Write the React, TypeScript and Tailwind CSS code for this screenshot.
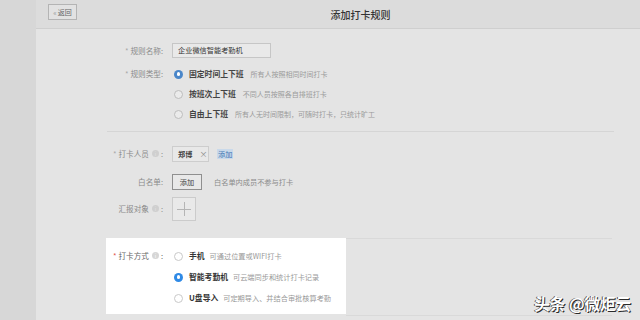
import * as React from "react";

const RADIO_SIZE = "h-[9px] w-[9px]";

function Radio({ checked, dim }: { checked?: boolean; dim?: boolean }) {
  if (checked) {
    return (
      <span
        className={`flex ${RADIO_SIZE} shrink-0 items-center justify-center rounded-full ${dim ? "bg-[#4a86c9]" : "bg-[#2f8ae6]"}`}
      >
        <span className="h-[3.5px] w-[3.5px] rounded-full bg-white" />
      </span>
    );
  }
  return (
    <span
      className={`${RADIO_SIZE} shrink-0 rounded-full border ${dim ? "border-[#bdbdbd] bg-[#ebebeb]" : "border-[#c9c9c9] bg-white"}`}
    />
  );
}

function Info({ dim }: { dim?: boolean }) {
  return (
    <span
      className={`ml-[3px] mr-[2px] inline-flex h-[7px] w-[7px] items-center justify-center rounded-full text-[5px] leading-none ${dim ? "bg-[#cfcfcf] text-[#e4e4e4]" : "bg-[#d6d6d6] text-white"}`}
    >
      i
    </span>
  );
}

function Label({
  children,
  required,
  info,
  dim = true,
}: {
  children: React.ReactNode;
  required?: boolean;
  info?: boolean;
  dim?: boolean;
}) {
  return (
    <div
      className={`flex w-[65px] shrink-0 items-center justify-end pr-[9px] text-[7.6px] ${dim ? "text-[#8a8a8a]" : "text-[#666]"}`}
    >
      {required && (
        <span className={`mr-[2px] ${dim ? "text-[#a8a8a8]" : "text-[#e0504a]"}`}>*</span>
      )}
      {children}
      {info && <Info dim={dim} />}
      <span>:</span>
    </div>
  );
}

const TYPES = [
  { title: "固定时间上下班", desc: "所有人按照相同时间打卡", checked: true },
  { title: "按班次上下班", desc: "不同人员按照各自排班打卡" },
  { title: "自由上下班", desc: "所有人无时间限制，可随时打卡，只统计旷工" },
];

const METHODS = [
  { title: "手机", desc: "可通过位置或WIFI打卡" },
  { title: "智能考勤机", desc: "可云端同步和统计打卡记录", checked: true },
  { title: "U盘导入", desc: "可定期导入、并结合审批核算考勤" },
];

export default function App() {
  return (
    <div className="relative flex h-[320px] w-[640px] overflow-hidden bg-[#e4e4e4] font-['Noto_Sans_CJK_SC','Noto_Sans',sans-serif]">
      <div className="w-[36px] shrink-0 bg-[#d7d7d7]" />

      <div className="flex min-w-0 flex-1 flex-col">
        {/* header */}
        <div className="flex h-[29px] shrink-0 items-start border-b border-[#cfcfcf] bg-[#dcdcdc] pl-[12px]">
          <button
            type="button"
            className="mt-[4px] flex h-[16px] w-[29px] items-center justify-center gap-[1px] border border-[#b4b4b4] bg-[#e2e2e2] text-[7px] text-[#666]"
          >
            <span className="text-[7px] text-[#999]">«</span>
            返回
          </button>
          <div className="ml-[4px] flex h-[28px] flex-1 items-center justify-center text-[10px] font-medium text-[#333]">
            添加打卡规则
          </div>
        </div>

        {/* form */}
        <div className="flex flex-col pl-[71px]">
          <div className="mt-[14px] flex h-[15px] items-center">
            <Label required>规则名称</Label>
            <div className="flex h-[15px] w-[99px] items-center border border-[#c6c6c6] bg-[#e9e9e9] pl-[5px] text-[7.2px] text-[#333]">
              企业微信智能考勤机
            </div>
          </div>

          <div className="mt-[6px] flex flex-col">
            {TYPES.map((t, i) => (
              <div key={t.title} className="flex h-[20px] items-center">
                {i === 0 ? <Label required>规则类型</Label> : <div className="w-[65px] shrink-0" />}
                <div className="flex items-center pl-[2px]">
                  <Radio checked={t.checked} dim />
                  <span className="ml-[6px] text-[7.8px] font-bold text-[#444]">{t.title}</span>
                  <span className="ml-[7px] text-[7px] text-[#9a9a9a]">{t.desc}</span>
                </div>
              </div>
            ))}
          </div>

          <div className="mt-[7px] h-[1px] w-[507px] bg-[#d5d5d5]" />

          <div className="mt-[14px] flex h-[16px] items-center">
            <Label required info>
              打卡人员
            </Label>
            <div className="flex h-[16px] w-[37px] items-center border border-[#cdcdcd] bg-[#e8e8e8] pl-[5px] text-[7.2px]">
              <span className="font-bold text-[#444]">郑博</span>
              <span className="ml-[7px] text-[8px] text-[#888]">×</span>
            </div>
            <span className="ml-[8px] bg-[#c9d9ea] px-[1px] text-[7.2px] text-[#3f77b3]">添加</span>
          </div>

          <div className="mt-[12px] flex h-[16px] items-center">
            <Label>白名单</Label>
            <div className="flex h-[16px] w-[30px] items-center justify-center border border-[#8f8f8f] bg-[#e8e8e8] text-[7.2px] text-[#444]">
              添加
            </div>
            <span className="ml-[12px] text-[7.2px] text-[#8a8a8a]">白名单内成员不参与打卡</span>
          </div>

          <div className="mt-[7px] flex h-[24px] items-center">
            <Label info>汇报对象</Label>
            <div className="relative flex h-[24px] w-[24px] items-center justify-center border border-[#cbcbcb] bg-[#e9e9e9]">
              <span className="absolute h-[14px] w-[1px] bg-[#b5b5b5]" />
              <span className="absolute h-[1px] w-[14px] bg-[#b5b5b5]" />
            </div>
          </div>

          {/* highlighted block */}
          <div className="-ml-[1px] mt-[17px] flex">
            <div className="flex h-[76px] w-[240px] flex-col bg-white pt-[8px] pl-[1px]">
              {METHODS.map((m, i) => (
                <div key={m.title} className="mb-[1px] flex h-[20px] items-center">
                  {i === 0 ? (
                    <Label required info dim={false}>
                      打卡方式
                    </Label>
                  ) : (
                    <div className="w-[65px] shrink-0" />
                  )}
                  <div className="flex items-center pl-[2px]">
                    <Radio checked={m.checked} />
                    <span className="ml-[6px] text-[7.8px] font-bold text-[#333]">{m.title}</span>
                    <span className="ml-[5px] text-[7.2px] text-[#999]">{m.desc}</span>
                  </div>
                </div>
              ))}
            </div>
            <div className="h-[78px] w-[266px] border-t border-b border-[#d9d9d9]" />
          </div>
        </div>
      </div>

      {/* watermark */}
      <div className="absolute bottom-[9px] right-[9px] text-[15.5px] font-bold leading-none text-white [text-shadow:1px_1px_0_#2a2a2a,-1px_0_0_#555]">
        头条 @微炬云
      </div>
    </div>
  );
}
